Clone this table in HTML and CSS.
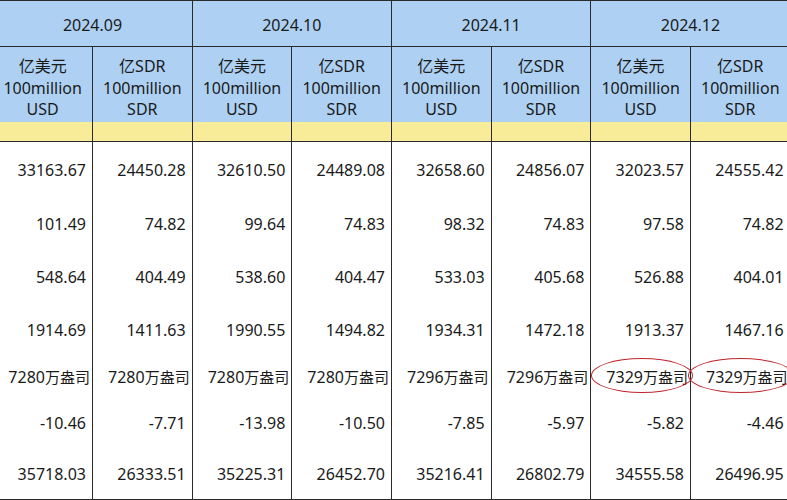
FILE: index.html
```html
<!DOCTYPE html>
<html lang="zh-CN">
<head>
<meta charset="utf-8">
<title>Reserve table</title>
<link rel="stylesheet" href="styles.css">
</head>
<body>
<table class="reserve">
  <colgroup>
    <col class="c"><col class="c"><col class="c"><col class="c"><col class="c"><col class="c"><col class="c"><col class="c">
  </colgroup>
  <thead>
    <tr class="month">
      <th colspan="2">2024.09</th>
      <th colspan="2">2024.10</th>
      <th colspan="2">2024.11</th>
      <th colspan="2">2024.12</th>
    </tr>
    <tr class="unit">
      <th>亿美元<br>100million<br>USD</th>
      <th>亿SDR<br>100million<br>SDR</th>
      <th>亿美元<br>100million<br>USD</th>
      <th>亿SDR<br>100million<br>SDR</th>
      <th>亿美元<br>100million<br>USD</th>
      <th>亿SDR<br>100million<br>SDR</th>
      <th>亿美元<br>100million<br>USD</th>
      <th>亿SDR<br>100million<br>SDR</th>
    </tr>
    <tr class="band">
      <th></th><th></th><th></th><th></th><th></th><th></th><th></th><th></th>
    </tr>
  </thead>
  <tbody>
    <tr class="r1">
      <td>33163.67</td><td>24450.28</td><td>32610.50</td><td>24489.08</td><td>32658.60</td><td>24856.07</td><td>32023.57</td><td>24555.42</td>
    </tr>
    <tr class="r2">
      <td>101.49</td><td>74.82</td><td>99.64</td><td>74.83</td><td>98.32</td><td>74.83</td><td>97.58</td><td>74.82</td>
    </tr>
    <tr class="r3">
      <td>548.64</td><td>404.49</td><td>538.60</td><td>404.47</td><td>533.03</td><td>405.68</td><td>526.88</td><td>404.01</td>
    </tr>
    <tr class="r4">
      <td>1914.69</td><td>1411.63</td><td>1990.55</td><td>1494.82</td><td>1934.31</td><td>1472.18</td><td>1913.37</td><td>1467.16</td>
    </tr>
    <tr class="r5">
      <td>7280<span class="u">万盎司</span></td><td>7280<span class="u">万盎司</span></td><td>7280<span class="u">万盎司</span></td><td>7280<span class="u">万盎司</span></td><td>7296<span class="u">万盎司</span></td><td>7296<span class="u">万盎司</span></td><td class="circled first">7329<span class="u">万盎司</span></td><td class="circled second">7329<span class="u">万盎司</span></td>
    </tr>
    <tr class="r6">
      <td>-10.46</td><td>-7.71</td><td>-13.98</td><td>-10.50</td><td>-7.85</td><td>-5.97</td><td>-5.82</td><td>-4.46</td>
    </tr>
    <tr class="r7">
      <td>35718.03</td><td>26333.51</td><td>35225.31</td><td>26452.70</td><td>35216.41</td><td>26802.79</td><td>34555.58</td><td>26496.95</td>
    </tr>
  </tbody>
</table>
</body>
</html>
```

FILE: styles.css
```css
html, body {
  margin: 0;
  padding: 0;
  background: #ffffff;
  overflow: hidden;
}

body {
  width: 787px;
  height: 500px;
  font-family: "Noto Sans", "Noto Sans CJK SC", sans-serif;
  font-size: 16px;
  color: #1a1a1a;
}

.reserve {
  border-collapse: collapse;
  table-layout: fixed;
  width: 797.4px;
  margin-left: -7.7px;
}

.reserve .c {
  width: 99.67px;
}

.reserve th,
.reserve td {
  padding: 0;
  border-left: 1px solid #2a2a2a;
  border-right: 1px solid #2a2a2a;
}

.reserve th {
  font-weight: normal;
  text-align: center;
}

.month th {
  background: #aed1f3;
  height: 42px;
  border-top: 1px solid #2a2a2a;
  border-bottom: 1px solid #2a2a2a;
  line-height: 20px;
  padding-top: 3px;
}

.unit th {
  background: #aed1f3;
  height: 67px;
  line-height: 21.5px;
  padding-top: 8px;
  vertical-align: middle;
}

.band th {
  background: #f9ec98;
  height: 19px;
  border-bottom: 1px solid #2a2a2a;
}

.reserve td {
  text-align: right;
  padding-right: 6px;
  white-space: nowrap;
  line-height: 20px;
}

.r1 td { height: 55px; }
.r2 td { height: 53px; }
.r3 td { height: 53px; }
.r4 td { height: 53px; }
.r5 td { height: 42px; padding-right: 2px; }
.r6 td { height: 50px; }
.r7 td { height: 51px; border-bottom: 1px solid #2a2a2a; }

.u {
  font-size: 15px;
}

.circled {
  position: relative;
}

.circled::after {
  content: "";
  position: absolute;
  top: 2px;
  bottom: 5px;
  border: 1.5px solid #c0262c;
  border-radius: 50%;
  pointer-events: none;
}

.circled.first::after {
  left: 0;
  right: -3px;
}

.circled.second::after {
  left: -3px;
  right: -4px;
}
```
